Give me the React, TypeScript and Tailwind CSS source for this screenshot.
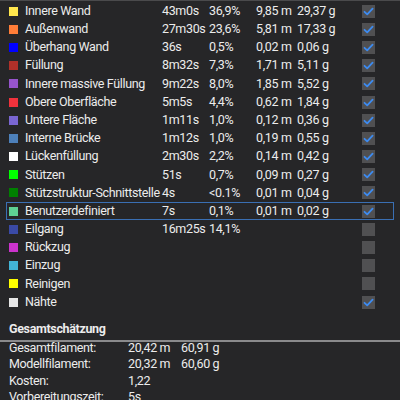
import React from "react";

type Row = {
  color: string;
  label: string;
  time?: string;
  pct?: string;
  m?: string;
  g?: string;
  checked: boolean;
  hl?: boolean;
};

const rows: Row[] = [
  { color: "#FFE64D", label: "Innere Wand", time: "43m0s", pct: "36,9%", m: "9,85 m", g: "29,37 g", checked: true },
  { color: "#FF7D38", label: "Außenwand", time: "27m30s", pct: "23,6%", m: "5,81 m", g: "17,33 g", checked: true },
  { color: "#0000FF", label: "Überhang Wand", time: "36s", pct: "0,5%", m: "0,02 m", g: "0,06 g", checked: true },
  { color: "#B03029", label: "Füllung", time: "8m32s", pct: "7,3%", m: "1,71 m", g: "5,11 g", checked: true },
  { color: "#9654CC", label: "Innere massive Füllung", time: "9m22s", pct: "8,0%", m: "1,85 m", g: "5,52 g", checked: true },
  { color: "#F0323C", label: "Obere Oberfläche", time: "5m5s", pct: "4,4%", m: "0,62 m", g: "1,84 g", checked: true },
  { color: "#7A66D2", label: "Untere Fläche", time: "1m11s", pct: "1,0%", m: "0,12 m", g: "0,36 g", checked: true },
  { color: "#4D80BA", label: "Interne Brücke", time: "1m12s", pct: "1,0%", m: "0,19 m", g: "0,55 g", checked: true },
  { color: "#FFFFFF", label: "Lückenfüllung", time: "2m30s", pct: "2,2%", m: "0,14 m", g: "0,42 g", checked: true },
  { color: "#00FF00", label: "Stützen", time: "51s", pct: "0,7%", m: "0,09 m", g: "0,27 g", checked: true },
  { color: "#008000", label: "Stützstruktur-Schnittstelle", time: "4s", pct: "<0.1%", m: "0,01 m", g: "0,04 g", checked: true },
  { color: "#5ED194", label: "Benutzerdefiniert", time: "7s", pct: "0,1%", m: "0,01 m", g: "0,02 g", checked: true, hl: true },
  { color: "#3A4AA6", label: "Eilgang", time: "16m25s", pct: "14,1%", checked: false },
  { color: "#CC33CC", label: "Rückzug", checked: false },
  { color: "#42B4D6", label: "Einzug", checked: false },
  { color: "#FFFF00", label: "Reinigen", checked: false },
  { color: "#E6E6E6", label: "Nähte", checked: true },
];

function Check({ checked }: { checked: boolean }) {
  return (
    <div className="w-[13px] h-[13px] bg-[#505052] flex items-center justify-center">
      {checked && (
        <svg width="11" height="11" viewBox="0 0 11 11">
          <path d="M1.5 5.8 L4.2 8.4 L9.6 2.6" fill="none" stroke="#3d8bf0" strokeWidth="1.8" strokeLinecap="round" strokeLinejoin="round" />
        </svg>
      )}
    </div>
  );
}

export default function App() {
  return (
    <div
      className="w-[400px] h-[400px] overflow-hidden bg-[#262628] text-[#ececec] text-[12.5px] leading-none tracking-[-0.35px]"
      style={{ fontFamily: 'Roboto, "Noto Sans", sans-serif' }}
    >
      <div className="h-px bg-[#4a4a4c]" />
      <div className="px-[6px] pt-px">
        {rows.map((r) => (
          <div
            key={r.label}
            className={`h-[18.2px] flex items-center pl-[2px] border ${r.hl ? "border-[#3a6fb3]" : "border-transparent"}`}
          >
            <div className="w-[9px] h-[9px] shrink-0" style={{ backgroundColor: r.color }} />
            <div className="w-[144px] pl-[7px] shrink-0 whitespace-nowrap">{r.label}</div>
            <div className="w-[47px] shrink-0 whitespace-nowrap">{r.time}</div>
            <div className="w-[47px] shrink-0 whitespace-nowrap">{r.pct}</div>
            <div className="w-[41px] shrink-0 whitespace-nowrap">{r.m}</div>
            <div className="w-[65px] shrink-0 whitespace-nowrap">{r.g}</div>
            <Check checked={r.checked} />
          </div>
        ))}
      </div>
      <div className="pl-[9px] pt-[12px] pb-[4px] font-bold">Gesamtschätzung</div>
      <div className="h-[2px] bg-[#8a8a8c]" />
      <div className="pl-[9px] -mt-[2px] flex flex-col">
        {[
          ["Gesamtfilament:", "20,42 m", "60,91 g"],
          ["Modellfilament:", "20,32 m", "60,60 g"],
          ["Kosten:", "1,22", ""],
          ["Vorbereitungszeit:", "5s", ""],
        ].map(([a, b, c]) => (
          <div key={a} className="h-[16.5px] flex items-center">
            <div className="w-[119px] shrink-0">{a}</div>
            <div className="w-[53px] shrink-0 whitespace-nowrap">{b}</div>
            <div className="whitespace-nowrap">{c}</div>
          </div>
        ))}
      </div>
    </div>
  );
}
